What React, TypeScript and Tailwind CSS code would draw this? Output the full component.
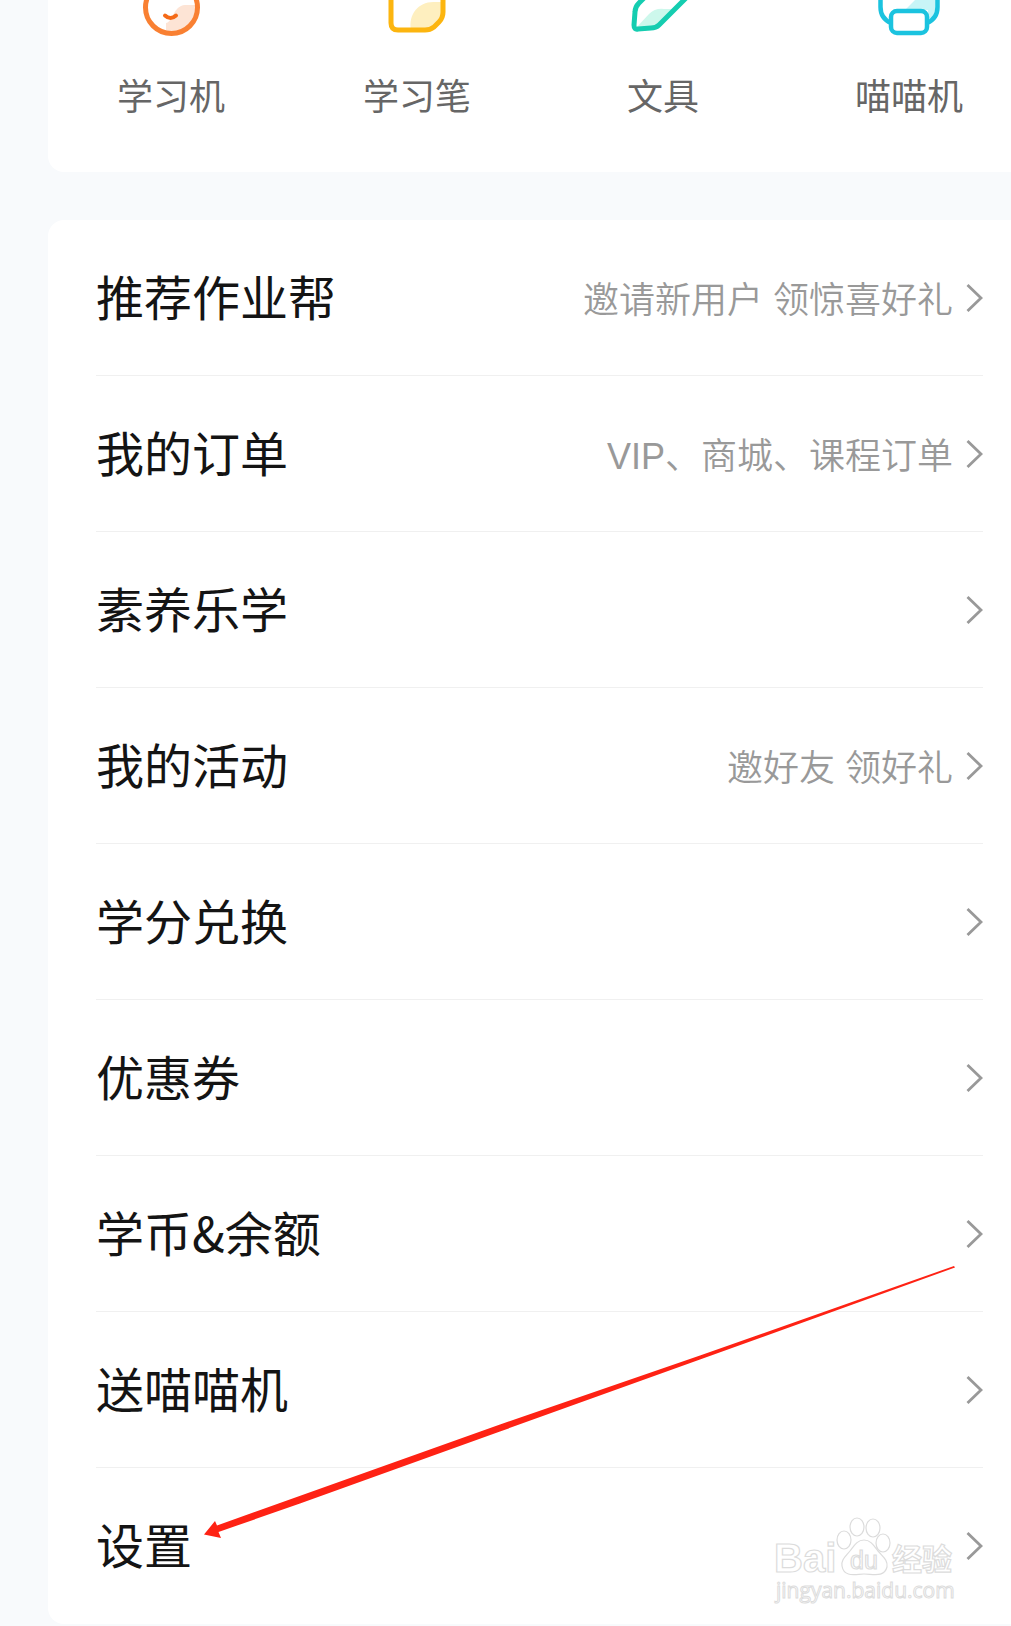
import type { ReactNode } from "react";

interface DeviceProps {
  label: string;
  icon: ReactNode;
}

interface MenuItemProps {
  label: string;
  hint?: string;
}

const LearningMachineIcon = () => (
  <svg viewBox="0 0 72 72" className="size-[72px]" fill="none" aria-hidden="true">
    <path
      d="M31 68V59C38 58 38 42 50 41H63C63 54 52 68 36 69Z"
      fill="#fde4d5"
    />
    <circle cx="36.5" cy="43.5" r="26" stroke="#f98032" strokeWidth="5" />
    <path
      d="M30 51.5Q35.5 56.5 41 51.5"
      stroke="#f56a17"
      strokeWidth="4"
      strokeLinecap="round"
    />
  </svg>
);

const LearningPenIcon = () => (
  <svg viewBox="0 0 72 72" className="size-[72px]" fill="none" aria-hidden="true">
    <path d="M30 66C27 50 38 37 54 38H62V54L50 66Z" fill="#feefbf" />
    <path
      d="M10 12V59Q10 66 17 66H44Q49 66 53 63L58 58Q62 54 62 48V12Q62 6 56 6H16Q10 6 10 12Z"
      stroke="#fcb50f"
      strokeWidth="5"
      strokeLinejoin="round"
    />
  </svg>
);

const StationeryIcon = () => (
  <svg viewBox="0 0 72 72" className="size-[72px]" fill="none" aria-hidden="true">
    <path d="M9 64L22 50Q28 44 37 45H46L30 62Z" fill="#cdf8ec" />
    <path
      d="M44 7L12 39Q8 43 8 48L7 61Q7 66 11 65L24 64Q29 64 32 61L66 27Z"
      stroke="#15cdb0"
      strokeWidth="5"
      strokeLinejoin="round"
    />
  </svg>
);

const PrinterIcon = () => (
  <svg viewBox="0 0 72 72" className="size-[72px]" fill="none" aria-hidden="true">
    <path d="M32 46L44 34H64V44C64 51 60 56 55 58V46Z" fill="#c8f5f7" />
    <path
      d="M18 59C11 56 7.5 50 7.5 43V28H64.5V43C64.5 50 61 56 54 59"
      stroke="#1bc3df"
      strokeWidth="4.5"
    />
    <rect
      x="18"
      y="47"
      width="36"
      height="22"
      rx="6"
      fill="#fff"
      stroke="#1bc3df"
      strokeWidth="4.5"
    />
  </svg>
);

const ChevronIcon = () => (
  <svg
    viewBox="0 0 18 30"
    className="h-[30px] w-[18px] shrink-0"
    fill="none"
    aria-hidden="true"
  >
    <path d="M2.5 2L16 15L2.5 28" stroke="#999" strokeWidth="2.8" />
  </svg>
);

const DEVICES: DeviceProps[] = [
  { label: "学习机", icon: <LearningMachineIcon /> },
  { label: "学习笔", icon: <LearningPenIcon /> },
  { label: "文具", icon: <StationeryIcon /> },
  { label: "喵喵机", icon: <PrinterIcon /> },
];

const MENU_ITEMS: MenuItemProps[] = [
  { label: "推荐作业帮", hint: "邀请新用户 领惊喜好礼" },
  { label: "我的订单", hint: "VIP、商城、课程订单" },
  { label: "素养乐学" },
  { label: "我的活动", hint: "邀好友 领好礼" },
  { label: "学分兑换" },
  { label: "优惠券" },
  { label: "学币&余额" },
  { label: "送喵喵机" },
  { label: "设置" },
];

const Device = ({ label, icon }: DeviceProps) => (
  <a href="#" className="flex flex-col items-center text-[#666]">
    <span className="-mt-9">{icon}</span>
    <span className="mt-7 pb-1 text-4xl leading-[60px]">{label}</span>
  </a>
);

const MenuItem = ({ label, hint }: MenuItemProps) => (
  <li className="border-b border-[#f0f0f0] last:border-transparent">
    <a href="#" className="flex h-[155px] items-center justify-between">
      <span className="pb-1.5 text-5xl text-[#141414]">{label}</span>
      <span className="flex items-center gap-3">
        {hint && (
          <span className="pt-1.5 font-['Liberation_Sans','Noto_Sans_CJK_SC',sans-serif] text-4xl font-[350] text-[#999]">
            {hint}
          </span>
        )}
        <ChevronIcon />
      </span>
    </a>
  </li>
);

const Watermark = () => (
  <svg
    viewBox="0 0 190 96"
    className="pointer-events-none absolute right-12 bottom-4 h-24 w-[190px]"
    fill="#fff"
    stroke="#dcdcdc"
    strokeWidth="1.2"
  >
    <g fontFamily="'Liberation Sans', sans-serif" fontWeight="700">
      <text x="1" y="60" fontSize="40">
        Bai
      </text>
      <ellipse cx="71" cy="28" rx="7" ry="9" />
      <ellipse cx="84" cy="15" rx="7" ry="9" />
      <ellipse cx="100" cy="16" rx="7" ry="9" />
      <ellipse cx="110" cy="31" rx="7" ry="9" />
      <path d="M91 28C84 28 81 34 77 39C72 45 68 48 69 54C71 66 83 62 91 62C100 62 111 66 114 55C115 48 110 45 105 39C101 34 98 28 91 28Z" />
      <text x="77" y="57" fontSize="25" fontWeight="400">
        du
      </text>
    </g>
    <text
      x="119"
      y="58"
      fontSize="30"
      fontWeight="700"
      fontFamily="'Noto Sans CJK SC', sans-serif"
    >
      经验
    </text>
    <text x="3" y="86" fontSize="21" strokeWidth="1" fontFamily="'Open Sans', sans-serif">
      jingyan.baidu.com
    </text>
  </svg>
);

const Arrow = () => (
  <svg
    viewBox="0 0 756 280"
    className="pointer-events-none absolute right-[55px] bottom-[80px] h-[280px] w-[756px]"
    aria-hidden="true"
  >
    <path
      d="M4 270.5L15 257L17 261.5L300 160.5L500 91.5L754 2L755 3.5L500 95.5L300 167.5L100 239.5L18.5 268L21 274Z"
      fill="#fe2214"
    />
  </svg>
);

function App() {
  return (
    <div className="min-h-screen overflow-hidden bg-slate-50 pl-12 font-['Noto_Sans_CJK_SC',sans-serif]">
      <section className="rounded-bl-2xl bg-white pb-11">
        <div className="-mr-[21px] grid grid-cols-4">
          {DEVICES.map((device) => (
            <Device key={device.label} {...device} />
          ))}
        </div>
      </section>

      <section className="relative mt-12 rounded-l-2xl bg-white">
        <ul className="pr-7 pl-12">
          {MENU_ITEMS.map((item) => (
            <MenuItem key={item.label} {...item} />
          ))}
        </ul>
        <Watermark />
        <Arrow />
      </section>
    </div>
  );
}

export default App;
